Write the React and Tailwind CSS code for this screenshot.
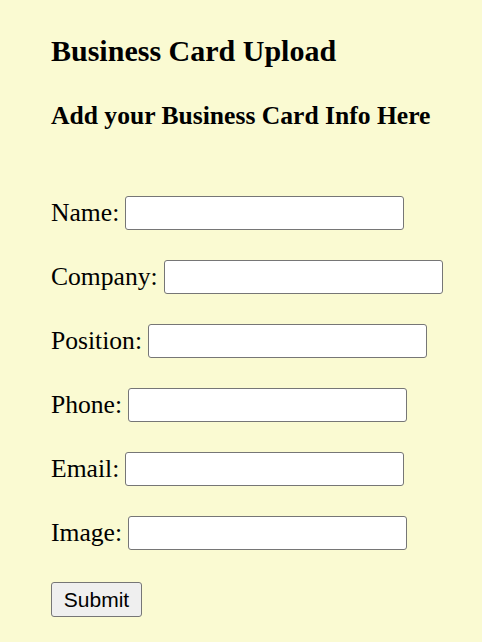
export default function App() {
  const fields = ["Name", "Company", "Position", "Phone", "Email", "Image"]
  return (
    <div className="min-h-screen bg-[#fafad2] pl-[51px] pt-[34px] font-['Liberation_Serif',serif] text-black">
      <h1 className="text-[30px] font-bold leading-[34px]">Business Card Upload</h1>
      <h2 className="mt-[34px] text-[25.6px] font-bold leading-[28px]">Add your Business Card Info Here</h2>
      <form className="mt-[66px] flex flex-col gap-[30px]" onSubmit={(e) => e.preventDefault()}>
        {fields.map((f) => (
          <label key={f} className="flex h-[34px] items-center text-[25.6px]">
            <span>{f}:</span>
            <input
              type="text"
              className="ml-[6px] h-[34px] w-[279px] rounded-[3px] border border-[#767676] bg-white px-1 text-[16px] outline-none"
            />
          </label>
        ))}
        <div className="mt-[2px]">
          <button
            type="submit"
            className="h-[35px] w-[91px] rounded-[3px] border border-[#767676] bg-[#efefef] font-['Liberation_Sans',sans-serif] text-[21px] leading-none text-black"
          >
            Submit
          </button>
        </div>
      </form>
    </div>
  )
}
